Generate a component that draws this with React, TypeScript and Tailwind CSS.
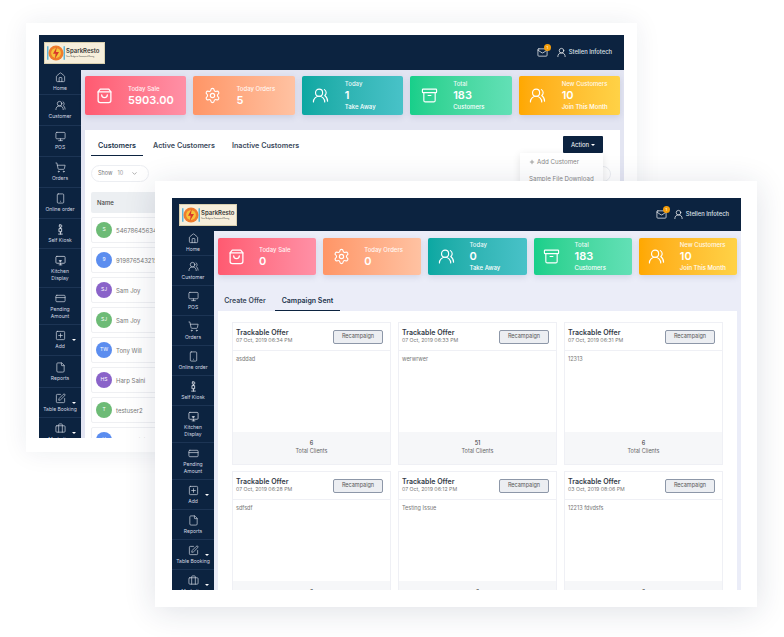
import {
  Archive,
  Briefcase,
  CreditCard,
  File,
  House,
  Mail,
  Monitor,
  Settings,
  ShoppingCart,
  Smartphone,
  SquarePen,
  SquarePlus,
  UserRound,
  UsersRound,
  ChevronDown,
  Plus,
} from "lucide-react";

const font = "[font-family:'Inter','Liberation_Sans',sans-serif]";

function BagIcon({ className }: { className?: string }) {
  return (
    <svg viewBox="0 0 24 24" fill="none" stroke="currentColor" strokeWidth="1.8" strokeLinecap="round" strokeLinejoin="round" className={className}>
      <path d="M6 3h12l3 4v12a3 3 0 0 1-3 3H6a3 3 0 0 1-3-3V7z" />
      <path d="M3 7h18" />
      <path d="M8 11a4 4 0 0 0 8 0" />
    </svg>
  );
}

function KioskIcon({ className }: { className?: string }) {
  return (
    <svg viewBox="0 0 24 24" fill="none" stroke="currentColor" strokeWidth="2" strokeLinecap="round" strokeLinejoin="round" className={className}>
      <rect x="9.500" y="2" width="5" height="5" rx="1" />
      <path d="M12 7v3M9.500 10h5v7h-5zM12 17v5M8 22h8" />
    </svg>
  );
}

function KitchenIcon({ className }: { className?: string }) {
  return (
    <svg viewBox="0 0 24 24" fill="none" stroke="currentColor" strokeWidth="1.700" strokeLinecap="round" strokeLinejoin="round" className={className}>
      <rect x="2" y="3" width="20" height="15" rx="2" />
      <path d="M9 21.500h6M12 18v3.500" />
      <path d="M10 12h4l-2 3z" fill="currentColor" />
    </svg>
  );
}

const menu = [
  { label: ["Home"], Icon: House },
  { label: ["Customer"], Icon: UsersRound },
  { label: ["POS"], Icon: Monitor },
  { label: ["Orders"], Icon: ShoppingCart },
  { label: ["Online order"], Icon: Smartphone },
  { label: ["Self Kiosk"], Icon: KioskIcon },
  { label: ["Kitchen", "Display"], Icon: KitchenIcon },
  { label: ["Pending", "Amount"], Icon: CreditCard },
  { label: ["Add"], Icon: SquarePlus, caret: true },
  { label: ["Reports"], Icon: File },
  { label: ["Table Booking"], Icon: SquarePen, caret: true },
  { label: ["Marketing"], Icon: Briefcase, caret: true },
];

function Sidebar({ heights }: { heights: string[] }) {
  return (
    <div className="w-[42px] flex-none overflow-hidden bg-[#0c2340]">
      {menu.map((m, i) => (
        <div key={m.label[0]} className={`relative flex flex-col items-center justify-center border-b border-[#1c3454] text-[#d3d9e3] ${heights[i]}`}>
          <m.Icon className="h-[11px] w-[11px]" strokeWidth={1.5} />
          <div className="mt-[2px] text-center text-[5px] leading-[7px] whitespace-nowrap">
            {m.label.map((l) => (
              <div key={l}>{l}</div>
            ))}
          </div>
          {m.caret && <span className="absolute right-[5px] top-[14px] h-0 w-0 border-x-[2px] border-t-[2px] border-x-transparent border-t-white" />}
        </div>
      ))}
    </div>
  );
}

function Logo({ box }: { box: string }) {
  return (
    <div className={`flex items-center gap-[1px] border border-[#d9cfae] bg-[#f6eedb] pl-[2px] ${box}`}>
      <svg viewBox="0 0 24 24" className="h-[18px] w-[18px] flex-none">
        <rect x="0" y="3" width="2" height="18" fill="#5fb4d8" />
        <rect x="22" y="3" width="2" height="18" fill="#5fb4d8" />
        <circle cx="12" cy="12" r="10" fill="#ef7d2c" />
        <circle cx="12" cy="12" r="6.5" fill="#f6c33b" />
        <path d="M13 4l-5 9h3.5l-1 7 5.500-9.500H12z" fill="#d9392b" />
      </svg>
      <div className="min-w-0 text-[#3a3a3a]">
        <div className="text-[6px] font-semibold leading-[8px]">SparkResto</div>
        <div className="text-[1.800px] leading-[3px] whitespace-nowrap">Your Bridge to Concept of Dining</div>
      </div>
    </div>
  );
}

function Navbar({ height, logo, gap }: { height: string; logo: React.ReactNode; gap: string }) {
  return (
    <div className={`flex flex-none items-center justify-between bg-[#0c2340] pr-[12px] ${height}`}>
      {logo}
      <div className={`flex items-center text-white ${gap}`}>
        <div className="relative">
          <Mail className="h-[11px] w-[11px]" strokeWidth={1.5} />
          <span className="absolute -right-[3px] -top-[3px] flex h-[7px] w-[7px] items-center justify-center rounded-full bg-[#f59e0b] text-[4px] leading-none">1</span>
        </div>
        <div className="flex items-center gap-[2px]">
          <UserRound className="h-[11px] w-[11px]" strokeWidth={1.5} />
          <span className="text-[5.800px] font-medium whitespace-nowrap text-[#dfe3ea]">Stellen Infotech</span>
        </div>
      </div>
    </div>
  );
}

type Stat = { Icon: typeof Settings | typeof BagIcon; top: string; value: string; bottom?: string; bg: string };

function StatCard({ s, h, iconBox }: { s: Stat; h: string; iconBox: string }) {
  return (
    <div className={`flex min-w-0 flex-1 items-center rounded-[2px] text-white shadow-[0_2px_6px_rgba(60,70,120,0.15)] ${h} ${s.bg}`}>
      <div className={`flex flex-none justify-center ${iconBox}`}>
        <s.Icon className="h-[17px] w-[17px]" strokeWidth={1.6} />
      </div>
      <div className="ml-[5px] min-w-0 whitespace-nowrap">
        <div className="text-[6px] font-medium leading-[8px] opacity-90">{s.top}</div>
        <div className="text-[11px] font-semibold leading-[14px]">{s.value}</div>
        {s.bottom && <div className="text-[6px] font-medium leading-[9px]">{s.bottom}</div>}
      </div>
    </div>
  );
}

const red = "bg-gradient-to-r from-[#ff5a71] to-[#ff90a6]";
const orange = "bg-gradient-to-r from-[#ff9566] to-[#ffc2a2]";
const teal = "bg-gradient-to-r from-[#0aa8a2] to-[#48c2c8]";
const green = "bg-gradient-to-r from-[#17cf8a] to-[#62e0b6]";
const yellow = "bg-gradient-to-r from-[#ffa800] to-[#ffd246]";

const backStats: Stat[] = [
  { Icon: BagIcon, top: "Today Sale", value: "5903.00", bg: red },
  { Icon: Settings, top: "Today Orders", value: "5", bg: orange },
  { Icon: UsersRound, top: "Today", value: "1", bottom: "Take Away", bg: teal },
  { Icon: Archive, top: "Total", value: "183", bottom: "Customers", bg: green },
  { Icon: UsersRound, top: "New Customers", value: "10", bottom: "Join This Month", bg: yellow },
];

const frontStats: Stat[] = [
  { Icon: BagIcon, top: "Today Sale", value: "0", bg: red },
  { Icon: Settings, top: "Today Orders", value: "0", bg: orange },
  { Icon: UsersRound, top: "Today", value: "0", bottom: "Take Away", bg: teal },
  { Icon: Archive, top: "Total", value: "183", bottom: "Customers", bg: green },
  { Icon: UsersRound, top: "New Customers", value: "10", bottom: "Join This Month", bg: yellow },
];

const customers = [
  { a: "S", name: "54678645634", bg: "bg-[#6dbb76]" },
  { a: "9", name: "919876543215", bg: "bg-[#5b8def]" },
  { a: "SJ", name: "Sam Joy", bg: "bg-[#8a63c9]" },
  { a: "SJ", name: "Sam Joy", bg: "bg-[#6dbb76]" },
  { a: "TW", name: "Tony Will", bg: "bg-[#5b8def]" },
  { a: "HS", name: "Harp Saini", bg: "bg-[#8a63c9]" },
  { a: "T", name: "testuser2", bg: "bg-[#6dbb76]" },
  { a: "H", name: "Harp Saini", bg: "bg-[#5b8def]" },
];

const offers = [
  { date: "07 Oct, 2019 06:34 PM", body: "asddad", n: "6" },
  { date: "07 Oct, 2019 06:33 PM", body: "werwrwer", n: "51" },
  { date: "07 Oct, 2019 06:31 PM", body: "12313", n: "6" },
  { date: "07 Oct, 2019 06:28 PM", body: "sdfsdf", n: "6" },
  { date: "07 Oct, 2019 06:12 PM", body: "Testing Issue", n: "6" },
  { date: "03 Oct, 2019 08:06 PM", body: "12213 fdvdsfs", n: "6" },
];

function BackWindow() {
  return (
    <div className="absolute left-[26px] top-[23px] h-[429px] w-[611px] bg-white p-[12px_13px_14px] shadow-[0_0_24px_rgba(30,40,80,0.08)]">
      <div className="flex h-full flex-col overflow-hidden">
        <Navbar
          height="h-[35px]"
          gap="gap-[8px]"
          logo={<div className="pl-[5px]"><Logo box="h-[22px] w-[61px]" /></div>}
        />
        <div className="flex min-h-0 flex-1">
          <Sidebar heights={["h-[25px]", "h-[31px]", "h-[31px]", "h-[31px]", "h-[31px]", "h-[30px]", "h-[39px]", "h-[37px]", "h-[31px]", "h-[32px]", "h-[30px]", "h-[30px]"]} />
          <div className="relative min-w-0 flex-1 bg-[#e3e5f2] px-[4px] pt-[6px]">
            <div className="flex gap-[7px]">
              {backStats.map((s) => (
                <StatCard key={s.top} s={s} h="h-[39px]" iconBox="w-[38px]" />
              ))}
            </div>
            <div className="relative mt-[15px] h-[320px] bg-white px-[6px]">
              <div className="flex items-start justify-between pr-[11px]">
                <div className="flex gap-[3px] text-[7.200px] font-semibold text-[#3c4a5c]">
                  <div className="flex h-[26px] items-center border-b-[1.500px] border-[#0c2340] px-[7px] pt-[8px] text-[#22344c]">Customers</div>
                  <div className="flex h-[26px] items-center px-[7px] pt-[6px]">Active Customers</div>
                  <div className="flex h-[26px] items-center px-[7px] pt-[6px]">Inactive Customers</div>
                </div>
                <div className="mt-[6px] flex h-[17px] w-[40px] items-center justify-center gap-[2px] rounded-[1px] bg-[#0c2340] text-[6px] text-white">
                  Action
                  <span className="h-0 w-0 border-x-[2px] border-t-[2px] border-x-transparent border-t-white" />
                </div>
              </div>
              <div className="mt-[9px] flex items-center justify-between pr-[3px]">
                <div className="flex h-[17px] w-[58px] items-center rounded-full border border-[#eceef2] pl-[6px] text-[5.500px] text-[#777]">
                  Show
                  <span className="ml-[5px] text-[#999]">10</span>
                  <ChevronDown className="ml-[8px] h-[7px] w-[7px]" />
                </div>
                <div className="h-[16px] w-[16px] rounded-full border border-[#eceef2]" />
              </div>
              <div className="mt-[10px] flex h-[21px] items-center rounded-[2px] bg-[#eceff2] pl-[6px] text-[6px] font-medium text-[#444]">Name</div>
              <div className="mt-[4px] flex flex-col gap-[4px]">
                {customers.map((c, i) => (
                  <div key={i} className="flex h-[26px] flex-none items-center gap-[4px] rounded-[2px] border border-[#eff0f3] pl-[4px]">
                    <div className={`flex h-[16px] w-[16px] items-center justify-center rounded-full text-[5px] text-white ${c.bg}`}>{c.a}</div>
                    <span className="text-[6px] text-[#777]">{c.name}</span>
                  </div>
                ))}
              </div>
              <div className="absolute right-[17px] top-[23px] w-[83px] bg-white pb-[6px] pl-[9px] pt-[4px] text-[6.200px] text-[#888] shadow-[0_2px_8px_rgba(0,0,0,0.1)]">
                <div className="flex items-center gap-[2px] leading-[10px]">
                  <Plus className="h-[6px] w-[6px]" strokeWidth={3} />
                  Add Customer
                </div>
                <div className="mt-[7px] whitespace-nowrap leading-[10px]">Sample File Download</div>
              </div>
            </div>
          </div>
        </div>
      </div>
    </div>
  );
}

function OfferCard({ o }: { o: (typeof offers)[number] }) {
  return (
    <div className="flex h-[143px] flex-col border border-[#eff0f5] bg-white">
      <div className="flex h-[28px] flex-none items-center justify-between border-b border-[#eff0f5] pl-[3px] pr-[7px]">
        <div>
          <div className="text-[7px] font-semibold leading-[8px] text-[#333b47]">Trackable Offer</div>
          <div className="text-[5.200px] leading-[7px] text-[#777]">{o.date}</div>
        </div>
        <div className="flex h-[14px] w-[50px] items-center justify-center rounded-[2px] border border-[#8d97a8] bg-[#eceef2] text-[5.500px] text-[#555]">Recampaign</div>
      </div>
      <div className="flex-1 pl-[3px] pt-[4px] text-[5.500px] leading-[8px] text-[#777]">{o.body}</div>
      <div className="flex h-[32px] flex-none flex-col items-center justify-center bg-[#f6f7f9] pb-[2px] text-[5.500px] leading-[8px] text-[#666]">
        <div className="font-medium text-[#444]">{o.n}</div>
        <div>Total Clients</div>
      </div>
    </div>
  );
}

function FrontWindow() {
  return (
    <div className="absolute left-[155px] top-[181px] h-[426px] w-[602px] bg-white p-[17px_16px_17px_17px] shadow-[0_4px_30px_rgba(30,40,80,0.14)]">
      <div className="flex h-full flex-col overflow-hidden">
        <Navbar
          height="h-[33px]"
          gap="gap-[6px]"
          logo={<div className="pl-[7px]"><Logo box="h-[22px] w-[58px]" /></div>}
        />
        <div className="flex min-h-0 flex-1">
          <Sidebar heights={["h-[25px]", "h-[30px]", "h-[30px]", "h-[30px]", "h-[30px]", "h-[30px]", "h-[37px]", "h-[37px]", "h-[30px]", "h-[30px]", "h-[30px]", "h-[30px]"]} />
          <div className="flex min-w-0 flex-1 flex-col bg-[#ebedf8] px-[4px] pt-[7px]">
            <div className="flex flex-none gap-[7px]">
              {frontStats.map((s) => (
                <StatCard key={s.top} s={s} h="h-[37px]" iconBox="w-[36px]" />
              ))}
            </div>
            <div className="mt-[15px] flex flex-none text-[7px] font-semibold text-[#3c4a5c]">
              <div className="flex h-[21px] w-[57px] items-center justify-center pr-[3px] pt-[1px]">Create Offer</div>
              <div className="flex h-[21px] w-[65px] items-center justify-center border-b-[1.500px] border-[#0c2340] pt-[3px] text-[#22344c]">Campaign Sent</div>
            </div>
            <div className="grid min-h-0 flex-1 grid-cols-3 content-start gap-x-[7px] gap-y-[6px] overflow-hidden bg-white px-[14px] pt-[11px]">
              {offers.map((o) => (
                <OfferCard key={o.date} o={o} />
              ))}
            </div>
          </div>
        </div>
      </div>
    </div>
  );
}

export default function App() {
  return (
    <div className={`relative h-[637px] w-[784px] overflow-hidden bg-white ${font}`}>
      <BackWindow />
      <FrontWindow />
    </div>
  );
}
